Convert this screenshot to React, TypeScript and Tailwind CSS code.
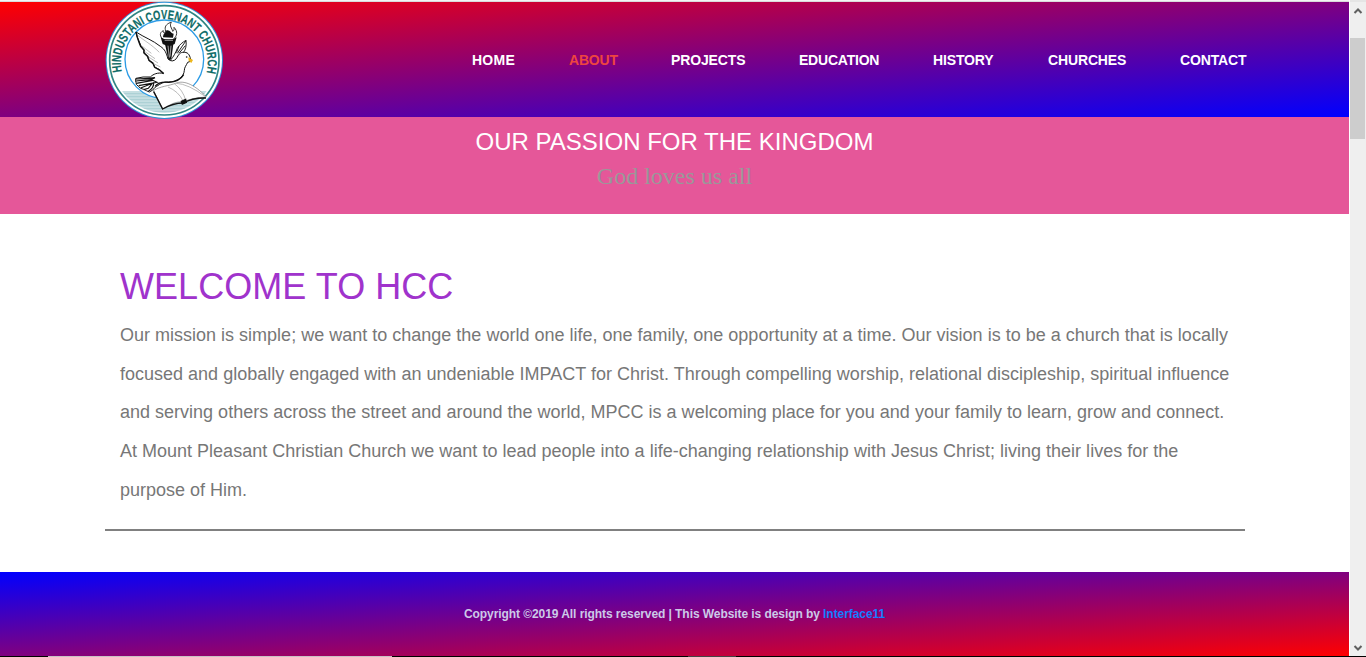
const links = [
  { label: 'HOME', slot: 'w-[97px] tracking-[0.25px]' },
  { label: 'ABOUT', slot: 'w-[102px] tracking-[-0.2px]' },
  { label: 'PROJECTS', slot: 'w-[128px] tracking-[-0.14px]' },
  { label: 'EDUCATION', slot: 'w-[134px] tracking-[-0.22px]' },
  { label: 'HISTORY', slot: 'w-[115px] tracking-[-0.14px]' },
  { label: 'CHURCHES', slot: 'w-[132px] tracking-[-0.14px]' },
  { label: 'CONTACT', slot: 'w-[70px] tracking-[-0.16px]' },
];

const paragraph = [
  'Our mission is simple; we want to change the world one life, one family, one opportunity at a time. Our vision is to be a church that is locally',
  'focused and globally engaged with an undeniable IMPACT for Christ. Through compelling worship, relational discipleship, spiritual influence',
  'and serving others across the street and around the world, MPCC is a welcoming place for you and your family to learn, grow and connect.',
  'At Mount Pleasant Christian Church we want to lead people into a life-changing relationship with Jesus Christ; living their lives for the',
  'purpose of Him.',
];

function Logo() {
  return (
    <svg className="block h-[120px] w-[130px] shrink-0" viewBox="0 0 390 360" role="img">
      <defs>
        <path id="ring" d="M66 215 A130 130 0 1 1 320 215" />
        <clipPath id="disc"><circle cx="193" cy="181" r="157" /></clipPath>
      </defs>
      <circle cx="193" cy="181" r="176" fill="#2b8fd6" />
      <circle cx="193" cy="181" r="173" fill="#fff" />
      <circle cx="193" cy="181" r="164" fill="#fff" stroke="#2f8583" strokeWidth="5" />
      <g clipPath="url(#disc)">
        <path d="M20 273H340V350H20Z" fill="#c5dfe2" />
        <path d="M20 281H340M20 290H340M20 299H340M20 308H340M20 317H340M20 326H340M20 335H340" stroke="#9bc6cb" strokeWidth="2" />
      </g>
      <circle cx="193" cy="178" r="118" fill="#fff" stroke="#2b9be6" strokeWidth="4" />
      <text fill="#0d6b67" stroke="#0d6b67" strokeWidth="0.6" fontFamily="Liberation Sans Narrow, Liberation Sans, sans-serif" fontWeight="700" fontSize="39" textLength="468" lengthAdjust="spacingAndGlyphs">
        <textPath href="#ring" textLength="468" lengthAdjust="spacingAndGlyphs">HINDUSTANI COVENANT CHURCH</textPath>
      </text>
      {/* torch */}
      <path d="M191 119C178 110 178 97 190 92C189 104 199 99 196 89C193 77 204 69 214 67C207 78 216 84 218 94C224 91 222 86 222 82C234 94 232 108 219 119Z" fill="#fff" stroke="#333" strokeWidth="3" />
      <path d="M189 112C190 98 198 99 199 91C210 88 212 99 221 101L219 113Z" fill="#111" />
      <path d="M182 112Q206 127 230 112L224 132Q206 143 188 132Z" fill="#111" />
      <path d="M194 121H219" stroke="#999" strokeWidth="3" />
      <path d="M195 132L206 182L214 177L220 132Z" fill="#111" />
      <path d="M204 137L208 173M213 137L210 170" stroke="#eee" strokeWidth="2" />
      {/* far wing */}
      <path d="M211 181C222 169 227 157 232 145C239 134 247 127 258 121C260 137 257 149 250 158" fill="#fff" stroke="#222" strokeWidth="3" />
      <path d="M258 122L232 160M256 137L237 160M237 139L229 158" stroke="#222" strokeWidth="3" />
      {/* open book */}
      <path d="M160 272C181 258 204 259 229 249C259 238 295 265 319 291C292 293 267 296 249 307C229 302 212 314 187 327Z" fill="#fff" stroke="#777" strokeWidth="2" />
      <path d="M160 272L187 324M204 261Q235 274 249 302M223 251Q249 270 257 301M229 250Q263 251 318 291" fill="none" stroke="#999" strokeWidth="2" />
      <path d="M161 275L188 327Q219 309 250 309Q277 293 318 294" fill="none" stroke="#111" strokeWidth="4" />
      <path d="M244 304l13-6 2 9-12 5z" fill="#111" stroke="#111" strokeWidth="4" />
      {/* dove */}
      <path d="M108 96C112 116 119 127 123 140L132 151L132 158L143 169L146 180L159 190L164 201L179 209L190 220C173 217 160 222 151 231Q129 229 108 235Q105 242 108 247L109 253L116 260L122 265L131 268L139 272L148 276Q160 271 164 263C178 254 188 245 205 246C232 246 252 231 253 211C253 202 259 196 263 187L274 183C269 168 267 157 253 157C239 156 236 164 229 176Q217 189 204 177C199 159 195 148 181 139C157 120 138 115 108 96Z" fill="#fff" stroke="#111" strokeWidth="3" strokeLinejoin="round" />
      <path d="M108 96C111 115 118 127 122 139L132 150L132 159L143 169L147 181L159 190L164 202L179 210L191 221" fill="none" stroke="#111" strokeWidth="4.5" />
      <path d="M113 106C134 123 153 132 178 157M123 136L154 160M132 153L165 176M144 170L174 189M159 190L181 201" fill="none" stroke="#777" strokeWidth="1.5" />
      <path d="M106 237Q135 237 165 233L153 239L107 243M109 250L158 241L171 247L116 257M122 264L157 250L145 265L131 269M145 274Q161 265 161 250" fill="none" stroke="#111" strokeWidth="3.5" />
      <path d="M165 259Q179 243 206 247Q239 245 251 224" fill="none" stroke="#111" strokeWidth="4" />
      <circle cx="260" cy="171" r="2.5" fill="#111" />
      <path d="M265 172L279 180L274 189L266 182Z" fill="#edb71e" />
    </svg>
  );
}

export default function App() {
  return (
    <div className="flex h-[657px] w-[1366px] flex-col overflow-hidden bg-white font-['Liberation_Sans',Arial,sans-serif]">
      <div className="flex h-[656px]">
        <div className="flex w-[1349px] flex-col">
          <div className="h-[2px] border-b border-[#dadada] bg-[#f4f4f4]" />
          <header className="flex h-[115px] items-start bg-[linear-gradient(to_bottom_right,#f00,#00f)] pl-[100px]">
            <div className="relative z-10 -mt-[2px]"><Logo /></div>
            <nav className="flex pt-[48px] pl-[242px]">
              {links.map(({ label, slot }) => (
                <a key={label} className={`${slot} block text-[14px] leading-5 font-bold whitespace-nowrap ${label === 'ABOUT' ? 'text-[#ee4540]' : 'text-white'}`}>{label}</a>
              ))}
            </nav>
          </header>
          <section className="h-[97px] bg-[#e55799] pt-[8px] text-center">
            <h2 className="text-[24px] leading-[34px] text-white">OUR PASSION FOR THE KINGDOM</h2>
            <p className="font-['Liberation_Serif',serif] text-[24px] leading-[34px] text-[#999]">God loves us all</p>
          </section>
          <main className="h-[358px] pt-[52px] pr-[104px] pl-[105px]">
            <div className="h-[265px] border-b-2 border-[#808080] pt-px pl-[15px]">
              <h1 className="text-[36px] leading-[40px] tracking-[0.05px] text-[#a033cc]">WELCOME TO HCC</h1>
              <div className="pt-[9px] text-[18px] leading-[38.7px] tracking-[0.005px] whitespace-nowrap text-[#777]">
                {paragraph.map((line) => <p key={line}>{line}</p>)}
              </div>
            </div>
          </main>
          <footer className="h-[84px] bg-[linear-gradient(to_bottom_right,#00f,#f00)] pt-[32px] text-center text-[12px] leading-5 font-bold tracking-[-0.07px] text-[#ccc9e8]">
            Copyright ©2019 All rights reserved | This Website is design by <a className="text-[#147dff]">Interface11</a>
          </footer>
        </div>
        <div className="flex w-[17px] flex-col border-l border-white bg-[#efefef]">
          <div className="flex h-[38px] justify-center border-t-2 border-[#e5e5e5] pt-[5px]">
            <svg className="h-[8px] w-[10px]" viewBox="0 0 10 8"><path d="M1.5 6L5 2.5L8.5 6" fill="none" stroke="#606060" strokeWidth="2" /></svg>
          </div>
          <div className="h-[101px] w-[15px] bg-[#cdcdcd]" />
          <div className="flex grow items-end justify-center pb-[4px]">
            <svg className="h-[8px] w-[10px]" viewBox="0 0 10 8"><path d="M1.5 2L5 5.5L8.5 2" fill="none" stroke="#606060" strokeWidth="2" /></svg>
          </div>
        </div>
      </div>
      <div className="flex h-px bg-black">
        <div className="ml-[48px] w-[344px] bg-[#c9c0c4]" />
        <div className="ml-[296px] w-[48px] bg-[#444]" />
      </div>
    </div>
  );
}
